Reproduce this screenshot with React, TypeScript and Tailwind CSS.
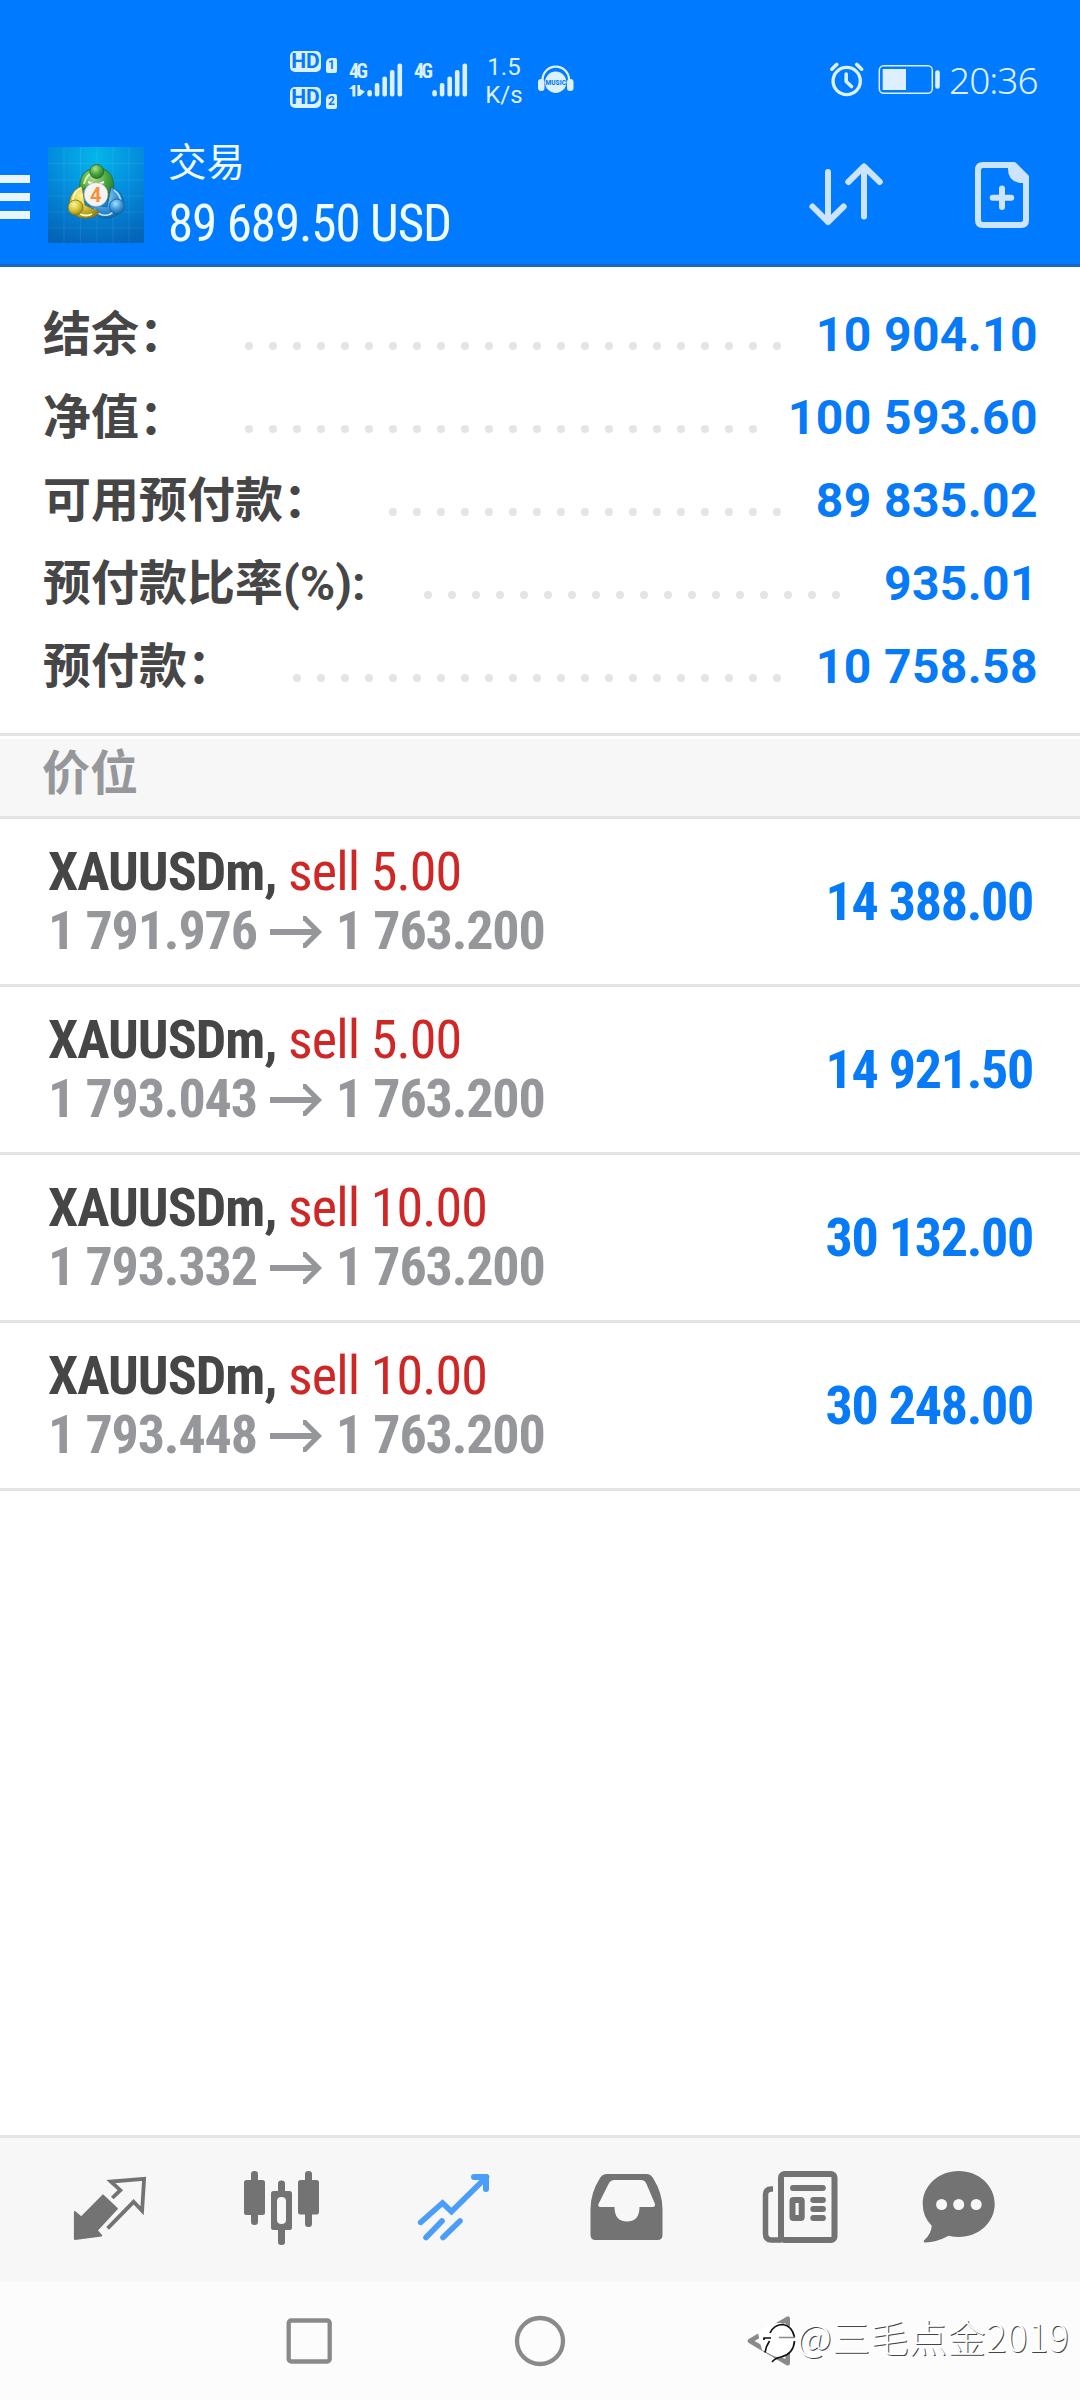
type SummaryRow = { label: string; value: string; dots: number };
type Position = { volume: string; open: string; current: string; profit: string };

const summary: SummaryRow[] = [
  { label: "结余：", value: "10 904.10", dots: 23 },
  { label: "净值：", value: "100 593.60", dots: 22 },
  { label: "可用预付款：", value: "89 835.02", dots: 17 },
  { label: "预付款比率(%):", value: "935.01", dots: 18 },
  { label: "预付款：", value: "10 758.58", dots: 21 },
];

const positions: Position[] = [
  { volume: "5.00", open: "1 791.976", current: "1 763.200", profit: "14 388.00" },
  { volume: "5.00", open: "1 793.043", current: "1 763.200", profit: "14 921.50" },
  { volume: "10.00", open: "1 793.332", current: "1 763.200", profit: "30 132.00" },
  { volume: "10.00", open: "1 793.448", current: "1 763.200", profit: "30 248.00" },
];

function Sim({ n }: { n: string }) {
  return (
    <div className="flex gap-[5px]">
      <div className="flex h-[21px] w-[31px] items-center justify-center rounded-[5px] bg-[#dcf0ff] font-['Roboto'] text-[21px] leading-[21px] font-bold text-[#007aff]">
        HD
      </div>
      <div className="mt-[7px] flex h-[15px] w-[11px] items-center justify-center rounded-[2px] rounded-tl-[5px] bg-[#dcf0ff] font-['Roboto'] text-[12px] leading-[15px] font-bold text-[#007aff]">
        {n}
      </div>
    </div>
  );
}

function Signal({ data }: { data?: boolean }) {
  return (
    <svg className="h-[48px] w-[56px] overflow-visible" viewBox="0 -8 56 48" fill="#dcf0ff">
      <text x="0" y="16" fontSize="20" fontWeight="700" fontFamily="Roboto Condensed" textLength="19">4G</text>
      {data && (
        <path d="M0 27l4.200-4h2.200v11.500H3.400V27H0zM8.400 23h2.600v4l5 2.500-5 4.500H8.400z" />
      )}
      <rect x="18.300" y="28" width="4.600" height="6.500" rx="2.300" />
      <rect x="25.800" y="21" width="4.600" height="13.500" rx="2" />
      <rect x="33.400" y="14.500" width="4.600" height="20" rx="2" />
      <rect x="40.900" y="8" width="4.600" height="26.500" rx="2" />
      <rect x="48.500" y="1.500" width="4.600" height="33" rx="2" />
    </svg>
  );
}

function StatusBar() {
  return (
    <div className="flex h-[124px] items-start pl-[290px] text-[#dcf0ff]">
      <div className="mt-[51px] flex w-[59px] flex-col gap-[14px]">
        <Sim n="1" />
        <Sim n="2" />
      </div>
      <div className="mt-[54px] flex gap-[9px]">
        <Signal data />
        <Signal />
      </div>
      <div className="mt-[53px] ml-[8px] flex w-[52px] flex-col items-center font-['Roboto'] text-[24px] leading-[28px]">
        <span>1.5</span>
        <span>K/s</span>
      </div>
      <svg className="mt-[64px] ml-[8px] h-[32px] w-[36px]" viewBox="538 64 36 32">
        <path d="M542.500 80a13.300 13.300 0 0 1 26.600 0" fill="none" stroke="#dcf0ff" strokeWidth="2.200" />
        <rect x="538" y="79" width="6.500" height="12" rx="3" fill="#dcf0ff" />
        <rect x="567" y="79" width="6.500" height="12" rx="3" fill="#dcf0ff" />
        <circle cx="555.700" cy="82.300" r="10.700" fill="#dcf0ff" />
        <text x="545.500" y="84.800" fontSize="6.500" fontWeight="800" fontFamily="Roboto" textLength="20.400" fill="#007aff">MUSIC</text>
      </svg>
      <svg className="mt-[60px] ml-[254px] h-[40px] w-[116px]" viewBox="828 60 116 40" fill="none" stroke="#dcf0ff" strokeLinecap="round">
        <circle cx="846.700" cy="81" r="13.600" strokeWidth="3.400" />
        <path d="M846.200 74v7.500l5.300 5" strokeWidth="3.600" strokeLinejoin="round" />
        <path d="M831.800 69.200l5-4.800M856.700 64.400l5 4.800" strokeWidth="3.600" />
        <rect x="879.300" y="65.700" width="53" height="27.500" rx="4.500" strokeWidth="1.500" />
        <rect x="882.700" y="69" width="23.300" height="21" fill="#dcf0ff" stroke="none" />
        <path d="M937.500 72.500v14" strokeWidth="4.600" />
      </svg>
      <span className="mt-[56px] ml-[5px] font-['Noto_Sans'] text-[37px] leading-[48px] font-light tracking-[-1px]">20:36</span>
    </div>
  );
}

function AppLogo() {
  return (
    <svg className="ml-[18px] h-[96px] w-[96px]" viewBox="48 147 96 96">
      <defs>
        <radialGradient id="bg" cx=".5" cy=".1" r=".95">
          <stop offset="0" stopColor="#04b6ea" />
          <stop offset=".5" stopColor="#048bdc" />
          <stop offset="1" stopColor="#0464b8" />
        </radialGradient>
        <radialGradient id="gr" cx=".4" cy=".3" r=".8">
          <stop offset="0" stopColor="#b5e08a" />
          <stop offset=".5" stopColor="#4aa53e" />
          <stop offset="1" stopColor="#1d6a26" />
        </radialGradient>
        <radialGradient id="ye" cx=".4" cy=".3" r=".8">
          <stop offset="0" stopColor="#fbf5a0" />
          <stop offset=".5" stopColor="#d8c432" />
          <stop offset="1" stopColor="#85791a" />
        </radialGradient>
        <radialGradient id="bl" cx=".4" cy=".3" r=".8">
          <stop offset="0" stopColor="#a9defc" />
          <stop offset=".5" stopColor="#3b97da" />
          <stop offset="1" stopColor="#10589a" />
        </radialGradient>
      </defs>
      <rect x="48" y="147" width="96" height="96" fill="url(#bg)" />
      <path
        d="M48 163.500h96M48 180h96M48 196h96M48 212h96M48 228h96M64 147v96M80.500 147v96M97 147v96M113 147v96M129 147v96"
        stroke="#fff"
        strokeOpacity=".1"
        strokeWidth=".8"
      />
      <path d="M80 190c-2-12 5-22 17-22s19 10 16 24c-1 6-4 8-7 9l-8-18z" fill="url(#gr)" stroke="#1e6a35" strokeWidth=".8" />
      <path d="M84 184c2-8 7-12 13-12" fill="none" stroke="#d8f3b8" strokeWidth="1.800" />
      <path d="M111 187c10 3 14 12 12 21-4 9-16 13-25 8-5-3-8-7-9-12l18 3z" fill="url(#bl)" stroke="#17609f" strokeWidth=".8" />
      <path d="M94 209c6 8 15 8 20 2M114 190c5 4 7 8 7 13" fill="none" stroke="#bfe6ff" strokeWidth="1.600" />
      <path d="M82 186c-9 3-14 12-12 22 3 9 13 12 23 9 3-1 5-3 6-5l-14-7z" fill="url(#ye)" stroke="#7c701d" strokeWidth=".8" />
      <path d="M73 201c0-6 3-11 8-13M80 214c4 2 8 2 12 0" fill="none" stroke="#fffbb8" strokeWidth="1.800" />
      <circle cx="96.700" cy="171.500" r="7" fill="url(#gr)" stroke="#1e6a35" strokeWidth=".8" />
      <circle cx="75.500" cy="207.500" r="7.500" fill="url(#ye)" stroke="#7c701d" strokeWidth=".8" />
      <circle cx="117" cy="206.500" r="7.500" fill="url(#bl)" stroke="#17609f" strokeWidth=".8" />
      <path d="M88 182l8 3 8-3" stroke="#fff" strokeWidth="2" fill="none" />
      <circle cx="96" cy="194.500" r="12" fill="#f6f4f2" stroke="#8c9a9a" strokeWidth=".6" />
      <text x="90" y="202" fontSize="20" fontWeight="700" fontFamily="Roboto" fill="#f5913c">4</text>
    </svg>
  );
}

function Header() {
  return (
    <header className="h-[267px] border-b-[3px] border-[#1968bd] bg-[#007aff]">
      <StatusBar />
      <div className="flex pt-[23px]">
        <div className="mt-[28px] flex w-[30px] flex-col gap-[10px]">
          <div className="h-[8px] bg-[#eaf6ff]" />
          <div className="h-[8px] bg-[#eaf6ff]" />
          <div className="h-[8px] bg-[#eaf6ff]" />
        </div>
        <AppLogo />
        <div className="-mt-[9px] ml-[24px] w-[620px] text-[#f0faff]">
          <div className="font-['Roboto','Noto_Sans_CJK_SC',sans-serif] text-[38.5px] leading-[50px]">交易</div>
          <div className="mt-[4px] font-['Roboto_Condensed'] text-[51px] leading-[64px] font-[450] tracking-[-1.1px] whitespace-pre">89 689.50 USD</div>
        </div>
        <svg className="mt-[9px] ml-[17px] h-[76px] w-[80px]" viewBox="805 156 80 76" fill="none" stroke="#cce4ff" strokeWidth="6" strokeLinecap="round" strokeLinejoin="round">
          <path d="M828 172v50M812.500 206.500L828 222l15.700-15.500M864 216.500v-50M848.300 182l15.700-15.500L879.800 182" />
        </svg>
        <svg className="mt-[9px] ml-[83px] h-[76px] w-[68px]" viewBox="968 156 68 76">
          <path d="M983 165h31l12 12v43q0 5-5 5h-38q-5 0-5-5v-50q0-5 5-5z" fill="none" stroke="#cce4ff" strokeWidth="6" strokeLinejoin="round" />
          <path d="M1008 164h7l13 13v6h-8q-12-2-12-14z" fill="#cce4ff" />
          <path d="M1002 188.500v18.500M992.700 197.800h18.500" stroke="#cce4ff" strokeWidth="6" strokeLinecap="round" />
        </svg>
      </div>
    </header>
  );
}

function TabBar() {
  const grey = "#737373";
  return (
    <nav className="flex h-[147px] border-t-[3px] border-[#e4e5e4] bg-[#f7f7f8] pt-[29px] pl-[70px]">
      <svg className="h-[80px] w-[80px]" viewBox="70 2167 80 80">
        <path d="M103 2195.500L117 2208.700 96.800 2230.300 101.300 2235.500 74.800 2239 74.800 2212 81.300 2217.500z" fill={grey} stroke={grey} strokeWidth="1.800" strokeLinejoin="round" />
        <path d="M112.300 2198l8-7.800-9.500-8.700 33.300-2.700-2 32-8.500-9-26 26.500" fill="none" stroke={grey} strokeWidth="3.800" />
      </svg>
      <svg className="ml-[92px] h-[80px] w-[80px]" viewBox="242 2167 80 80">
        <g fill={grey}>
          <rect x="251" y="2171" width="7" height="54" rx="3.300" />
          <rect x="244" y="2180" width="21" height="35" rx="2.500" />
          <rect x="278" y="2180.500" width="7" height="15" rx="3.300" />
          <rect x="278" y="2225" width="7" height="20" rx="3" />
          <rect x="305" y="2171" width="7" height="56" rx="3.300" />
          <rect x="298" y="2180" width="21" height="34.500" rx="2.500" />
          <path fillRule="evenodd" d="M273.500 2191h16q2.500 0 2.500 2.500v34q0 2.500-2.500 2.500h-16q-2.500 0-2.500-2.500v-34q0-2.500 2.500-2.500zM277 2201v19q0 4 4.500 4t4.500-4v-19q0-4-4.500-4t-4.500 4z" />
        </g>
      </svg>
      <svg className="ml-[92px] h-[80px] w-[80px]" viewBox="414 2167 80 80" fill="none" stroke="#4a9df8" strokeWidth="5.600">
        <path d="M420.700 2222.300l21.800-19.300 9 8.500 35-34.500" strokeLinecap="round" />
        <path d="M474 2177h12v12" strokeWidth="6" strokeLinecap="round" strokeLinejoin="round" />
        <path d="M426 2237.500l16-16.500M443 2237.500l17-16.500" strokeLinecap="round" />
      </svg>
      <svg className="ml-[92px] h-[80px] w-[80px]" viewBox="586 2167 80 80">
        <path
          fillRule="evenodd"
          fill={grey}
          d="M607 2174h39.500q4 0 6.500 4 9.500 15 9.500 31v26q0 5-5 5h-62q-5 0-5-5v-26q0-16 9.500-31 2.500-4 7-4zM614.500 2180q-4 0-6 4l-10 20q-1 3 2 3h14q0 14.500 12.500 14.500t12.500-14.500h13q3 0 2.500-3l-8.500-20q-1.500-4-5.500-4z"
        />
      </svg>
      <svg className="ml-[94px] h-[80px] w-[80px]" viewBox="760 2167 80 80" fill="none" stroke={grey} strokeWidth="6">
        <rect x="781" y="2174" width="53.500" height="66" rx="3.500" />
        <path d="M773 2189h-1.500q-6 0-6 6v38.500q0 6.500 6 6.500h10" strokeWidth="5.500" />
        <path d="M793 2188h29.800M813.300 2200h9.600M813.300 2209h9.600M813.300 2218h9.600" strokeLinecap="round" />
        <rect x="792.500" y="2200" width="9.200" height="18" rx="1" />
      </svg>
      <svg className="ml-[79px] h-[80px] w-[80px]" viewBox="918 2167 80 80">
        <path
          fill={grey}
          d="M957.700 2171c20 0 36 14.500 36 33s-16 33-36 33q-5 0-10-1.200-12 6.500-23.500 6.700-2.500-.5-.8-2.500 7.300-7 7.300-14.300-9-9-9-21.700c0-18.500 16-33 36-33z"
        />
        <g fill="#f7f7f8">
          <circle cx="940.600" cy="2204.500" r="5.500" />
          <circle cx="957.700" cy="2204.500" r="5.500" />
          <circle cx="975.200" cy="2204.500" r="5.500" />
        </g>
      </svg>
    </nav>
  );
}

function SystemNav() {
  return (
    <div className="relative flex h-[118px] items-start bg-[#fcfcfc] pt-[30px] pl-[283px]">
      <svg className="h-[60px] w-[52px]" viewBox="283 2312 52 60">
        <rect x="288.700" y="2320.500" width="41" height="41" rx="2.500" fill="none" stroke="#8a8a8a" strokeWidth="4.300" />
      </svg>
      <svg className="ml-[175px] h-[60px] w-[60px]" viewBox="510 2312 60 60">
        <circle cx="540" cy="2341" r="23" fill="none" stroke="#8a8a8a" strokeWidth="4.300" />
      </svg>
      <svg className="ml-[170px] h-[60px] w-[60px]" viewBox="740 2312 60 60">
        <path d="M750 2341L787.700 2318.700v44.600z" fill="none" stroke="#8a8a8a" strokeWidth="4.600" strokeLinejoin="round" />
      </svg>
      <div className="absolute top-[30px] left-[758px] flex items-start text-white">
        <svg className="h-[60px] w-[42px]" viewBox="758 2312 42 60">
          <ellipse cx="779" cy="2340" rx="15.500" ry="17" fill="#fff" />
          <path d="M758 2333l12-10 10 1-4 12-6 10 2 9-10-5-2-8z" fill="#fff" />
          <path d="M770 2333q4-8.500 13-8.500 9 1.500 11.500 12.500M764 2340v-2h7M769.500 2341q-3.500 5-4.500 11.500M794.500 2341q-1 13-13.500 16-6 1-9 5" fill="none" stroke="#111" strokeWidth="1.700" />
          <path d="M779 2337.500h16" stroke="#8a8a8a" strokeWidth="1.500" />
        </svg>
        <span className="-mt-[6px] -ml-[3px] font-['Noto_Sans_CJK_SC',sans-serif] text-[38px] leading-[60px] font-light tracking-[0.5px] whitespace-nowrap [text-shadow:1px_1px_0_#444]">
          @三毛点金2019
        </span>
      </div>
    </div>
  );
}

export default function App() {
  return (
    <div className="flex h-[2400px] w-[1080px] flex-col overflow-hidden bg-white">
      <Header />
      <section className="h-[469px] border-b-[3px] border-[#e4e4e4] pt-[26px] pr-[42px] pl-[43px] font-['Roboto','Noto_Sans_CJK_SC',sans-serif] text-[48px] leading-[83px] font-bold">
        {summary.map((r) => (
          <div key={r.label} className="flex h-[83px]">
            <span className="whitespace-nowrap text-[#464646]">{r.label}</span>
            <div className="mt-[49px] ml-[58px] flex gap-[16px]">
              {Array.from({ length: r.dots }, (_, i) => (
                <span key={i} className="h-[8px] w-[8px] shrink-0 rounded-full bg-[#e4e4e4]" />
              ))}
            </div>
            <span className="ml-auto tracking-[0.4px] whitespace-nowrap text-[#067af7]">{r.value}</span>
          </div>
        ))}
      </section>
      <div className="mt-[3px] h-[80px] border-b-[3px] border-[#e4e4e4] bg-[#f7f7f7] pl-[42px] font-['Roboto','Noto_Sans_CJK_SC',sans-serif] text-[48px] leading-[69px] font-bold text-[#96979b]">
        价位
      </div>
      {positions.map((p) => (
        <div
          key={p.open}
          className="flex h-[168px] items-center justify-between border-b-[3px] border-[#e4e4e4] pr-[47px] pl-[48px] font-['Roboto_Condensed'] text-[54px] leading-[59px] font-bold whitespace-pre"
        >
          <div className="-mt-[1px]">
            <div className="tracking-[-1px] text-[#464646]">
              XAUUSDm, <span className="font-[450] tracking-[-0.9px] text-[#cf2626]">sell {p.volume}</span>
            </div>
            <div className="flex tracking-[-1.15px] text-[#96979b]">
              <span>{p.open}</span>
              <svg className="mt-[15px] mr-[14px] ml-[13px] h-[32px] w-[52px]" viewBox="0 0 52 32" fill="none" stroke="#96979b">
                <path d="M0 16h47" strokeWidth="6" />
                <path d="M33 2.500h2L48.500 16 35 29.500h-2" strokeWidth="5" />
              </svg>
              <span>{p.current}</span>
            </div>
          </div>
          <div className="tracking-[-1.3px] text-[#067af7]">{p.profit}</div>
        </div>
      ))}
      <div className="flex-1" />
      <TabBar />
      <SystemNav />
    </div>
  );
}
